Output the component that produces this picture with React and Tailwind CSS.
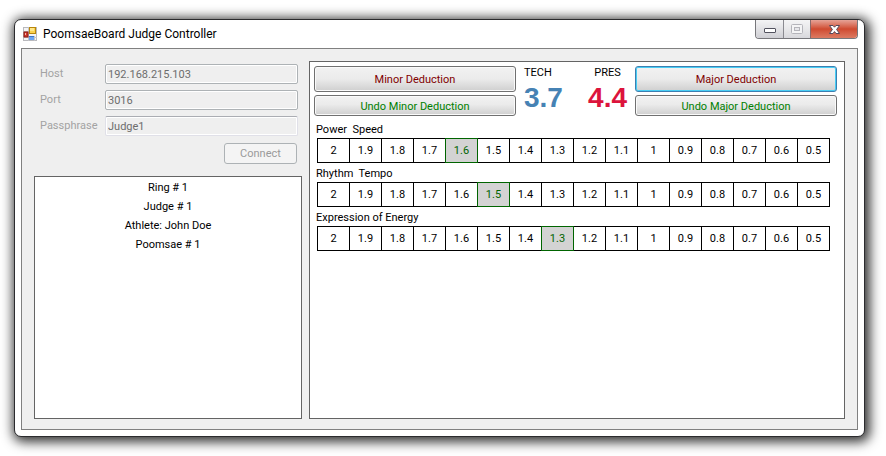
const SCORES = ["2", "1.9", "1.8", "1.7", "1.6", "1.5", "1.4", "1.3", "1.2", "1.1", "1", "0.9", "0.8", "0.7", "0.6", "0.5"];

const CATEGORIES = [
  { name: "Power  Speed", selected: "1.6" },
  { name: "Rhythm  Tempo", selected: "1.5" },
  { name: "Expression of Energy", selected: "1.3" },
];

function AppIcon() {
  return (
    <svg width="14" height="14" viewBox="0 0 14 14" aria-hidden="true">
      <rect x="0.5" y="0.5" width="13" height="13" fill="#f4f4f4" stroke="#b9b9bd" />
      <path d="M5.5 0V14M0 4.5H6M0 10.5H14M11.5 9V14" stroke="#c4c4c8" fill="none" />
      <rect x="6.5" y="0.5" width="6" height="6" fill="#fbd24f" stroke="#b8860b" />
      <rect x="7" y="1" width="4" height="3" fill="#ffe78a" />
      <rect x="1" y="5" width="4" height="5" fill="#d2382c" stroke="#8d1a14" />
      <rect x="2" y="6" width="1" height="2" fill="#f6b3a8" />
      <rect x="6" y="9" width="5" height="4" fill="#6ba5f2" />
      <path d="M6 9.5H11" stroke="#3c74c8" />
    </svg>
  );
}

function TitleBar() {
  return (
    <header className="flex h-7 items-start justify-between px-[6px]">
      <div className="flex h-7 items-center gap-[6px] pl-[2px]">
        <AppIcon />
        <h1 className="text-[12px] leading-4 text-black">PoomsaeBoard Judge Controller</h1>
      </div>
      <div className="flex h-[19px] overflow-hidden rounded-b-[4px] border border-t-0 border-[#77777b]">
        <button type="button" aria-label="Minimize" className="flex w-7 items-center justify-center border-r border-[#8a8a90] bg-linear-to-b from-[#f4f4f5] via-[#e2e2e5] to-[#cfcfd4]">
          <svg width="12" height="6" viewBox="0 0 12 6" className="mt-1" aria-hidden="true">
            <rect x="0.5" y="0.5" width="11" height="4" rx="0.5" fill="#fff" stroke="#53535f" />
          </svg>
        </button>
        <button type="button" aria-label="Maximize" disabled className="flex w-[27px] items-center justify-center border-r border-[#8a6a6a] bg-linear-to-b from-[#f4f4f5] via-[#e8e8ea] to-[#d8d8dc]">
          <svg width="12" height="10" viewBox="0 0 12 10" aria-hidden="true">
            <rect x="0.5" y="0.5" width="11" height="9" rx="1" fill="#f4f4f5" stroke="#b4b4ba" />
            <rect x="3.5" y="3.5" width="5" height="3" fill="#e6e6ea" stroke="#b4b4ba" />
          </svg>
        </button>
        <button type="button" aria-label="Close" className="flex w-[46px] items-center justify-center bg-linear-to-b from-[#e5a397] from-0% via-[#cf4a30] via-50% to-[#dc7a62] to-100%">
          <svg width="13" height="11" viewBox="0 0 13 11" aria-hidden="true">
            <path d="M1.5 1.5H5L6.5 3.2L8 1.5H11.5L8.6 5.5L11.5 9.5H8L6.5 7.6L5 9.5H1.5L4.4 5.5Z" fill="#fff" stroke="#55485a" strokeLinejoin="round" />
          </svg>
        </button>
      </div>
    </header>
  );
}

function Field({ id, label, value, tone }) {
  return (
    <div className="flex items-center">
      <label htmlFor={id} className="w-[65px] shrink-0 text-[#a3a3a3]">{label}</label>
      <input
        id={id}
        defaultValue={value}
        disabled
        className={`h-5 w-full min-w-0 rounded-[2px] border bg-[#efefef] px-[2px] text-[#6d6d6d] ring-1 ring-inset ring-white ${tone}`}
      />
    </div>
  );
}

function Connection() {
  return (
    <form className="flex flex-col gap-[6px] pr-1 pl-[6px]">
      <Field id="host" label="Host" value="192.168.215.103" tone="border-[#adb2b5]" />
      <Field id="port" label="Port" value="3016" tone="border-[#adb2b5]" />
      <Field id="passphrase" label="Passphrase" value="Judge1" tone="border-[#e0e0e8] border-t-[#abadb3]" />
      <button type="button" disabled className="mt-px mr-px h-[21px] w-[73px] self-end rounded-[3px] border border-[#adb2b5] bg-[#f4f4f4] text-[#9a9a9a]">
        Connect
      </button>
    </form>
  );
}

function DeductionPair({ kind, focused }) {
  return (
    <div className="flex flex-col gap-[3px]">
      <button
        type="button"
        className={`h-[26px] rounded-[3px] border bg-linear-to-b from-[#f2f2f2] from-0% via-[#ebebeb] via-50% to-[#cfcfcf] to-100% pt-[2px] text-[#800000] ring-1 ring-inset ${focused ? "border-[#3c7fb1] ring-[#48cdf4]" : "border-[#707070] ring-[#fafafa]"}`}
      >
        {kind} Deduction
      </button>
      <button
        type="button"
        className="h-[21px] rounded-[3px] border border-[#707070] bg-linear-to-b from-[#f2f2f2] from-0% via-[#ebebeb] via-45% to-[#cfcfcf] to-100% pt-[2px] text-[#008000] ring-1 ring-[#fafafa] ring-inset"
      >
        Undo {kind} Deduction
      </button>
    </div>
  );
}

function Total({ label, value, tone }) {
  return (
    <div className={`flex flex-col ${tone}`}>
      <span className="leading-[14px] text-black">{label}</span>
      <span className="pt-[2px] font-['Liberation_Sans',sans-serif] text-[28px] leading-8 font-bold">{value}</span>
    </div>
  );
}

function ScoreRow({ name, selected }) {
  return (
    <table className="w-full table-fixed border-collapse">
      <caption className="-ml-px h-[19px] pt-[3px] text-left leading-4 whitespace-pre">{name}</caption>
      <tbody>
        <tr>
          {SCORES.map((score) => (
            <td
              key={score}
              className={`h-6 border p-0 text-center ${score === selected ? "border-double border-[#006400] bg-[#d3d3d3] text-[#006400]" : "border-black"}`}
            >
              {score}
            </td>
          ))}
        </tr>
      </tbody>
    </table>
  );
}

export default function App() {
  return (
    <div className="flex min-h-screen bg-white pt-[19px] pr-[21px] pb-[19px] pl-[14px] font-[Roboto,sans-serif] text-[11px] leading-4 text-black">
      <div className="flex flex-1 flex-col rounded-[7px] border border-[#2b2b2e] bg-white shadow-[2px_2px_12px_3px_rgba(0,0,0,0.8)]">
        <TitleBar />
        <main className="mx-[6px] mb-[6px] flex flex-1 gap-[7px] border border-[#808080] bg-[#efefef] px-3 pt-3 pb-[10px]">
          <section className="flex w-[268px] shrink-0 flex-col gap-3 pt-[3px]">
            <Connection />
            <ul className="flex-1 border border-[#646464] bg-white pt-[1px] text-center leading-[19px]">
              <li>Ring # 1</li>
              <li>Judge # 1</li>
              <li>Athlete: John Doe</li>
              <li>Poomsae # 1</li>
            </ul>
          </section>
          <section className="flex-1 border border-[#646464] bg-white pt-1 pl-1">
            <div className="grid grid-cols-[1fr_119px_1fr] pr-[7px]">
              <DeductionPair kind="Minor" />
              <div className="flex justify-between px-2">
                <Total label="TECH" value="3.7" tone="items-start text-[#4682b4]" />
                <Total label="PRES" value="4.4" tone="items-center text-[#dc143c]" />
              </div>
              <DeductionPair kind="Major" focused />
            </div>
            <div className="pt-[3px] pr-[14px] pl-[3px]">
              {CATEGORIES.map((category) => (
                <ScoreRow key={category.name} {...category} />
              ))}
            </div>
          </section>
        </main>
      </div>
    </div>
  );
}
